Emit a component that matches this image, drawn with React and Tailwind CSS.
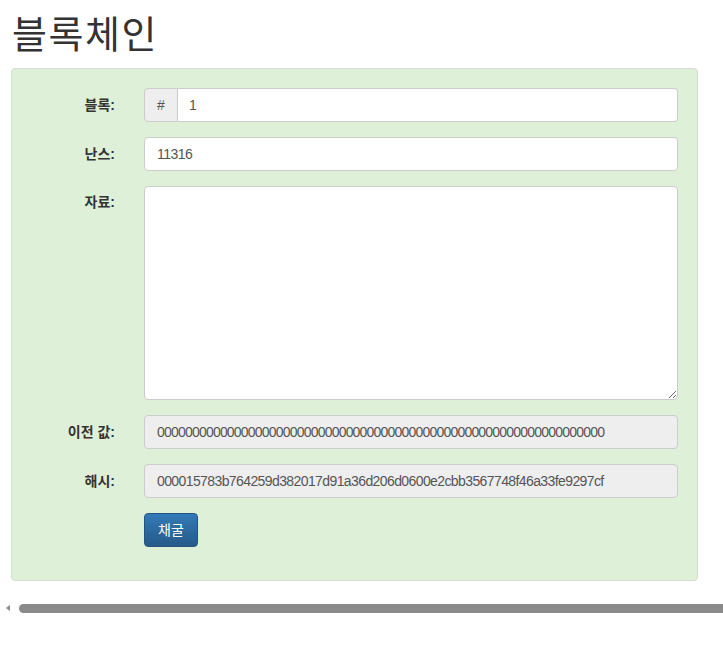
import React from 'react';

const font = { fontFamily: '"Liberation Sans", "Noto Sans CJK KR", sans-serif' };

const Row = ({ label, top, children }) => (
  <div className="flex mb-[15px]">
    <label className={`w-[103px] shrink-0 text-right text-[14px] font-bold text-[#333] ${top ? 'pt-[6px]' : 'pt-[7px]'}`}>{label}</label>
    <div className="ml-[29px] flex-1">{children}</div>
  </div>
);

export default function App() {
  return (
    <div className="w-[723px] h-[664px] bg-white overflow-hidden relative" style={font}>
      <div className="pl-[11px] pr-[25px]">
        <h1 className="pt-[12px] mb-[10px] pl-[1px] text-[38px] leading-[46px] tracking-[1.5px] text-[#333] font-normal">블록체인</h1>

        <div className="bg-[#dff0d8] border border-[#d6dcd3] rounded-[4px] pt-[19px] pb-[18px] pr-[19px] pl-[0px]">
          <Row label="블록:">
            <div className="flex h-[34px]">
              <span className="w-[34px] flex items-center justify-center bg-[#eee] border border-[#ccc] rounded-l-[4px] text-[14px] text-[#555]">#</span>
              <div className="flex-1 bg-white border border-l-0 border-[#ccc] rounded-r-[4px] pl-[11px] pr-[12px] flex items-center text-[14px] text-[#555]">1</div>
            </div>
          </Row>
          <Row label="난스:">
            <div className="h-[34px] bg-white border border-[#ccc] rounded-[4px] px-[12px] flex items-center text-[14px] text-[#555] tracking-[-0.5px]">11316</div>
          </Row>
          <Row label="자료:" top>
            <textarea className="block w-full h-[214px] bg-white border border-[#ccc] rounded-[4px] px-[12px] py-[6px] text-[14px] text-[#555]" defaultValue="" />
          </Row>
          <Row label="이전 값:">
            <div className="h-[34px] bg-[#eee] border border-[#ccc] rounded-[4px] px-[12px] flex items-center text-[14px] text-[#555] overflow-hidden whitespace-nowrap tracking-[-0.8px]">0000000000000000000000000000000000000000000000000000000000000000</div>
          </Row>
          <Row label="해시:">
            <div className="h-[34px] bg-[#eee] border border-[#ccc] rounded-[4px] px-[12px] flex items-center text-[14px] text-[#555] overflow-hidden whitespace-nowrap tracking-[-0.6px]">000015783b764259d382017d91a36d206d0600e2cbb3567748f46a33fe9297cf</div>
          </Row>
          <div className="flex">
            <div className="w-[132px] shrink-0" />
            <button className="h-[34px] px-[13px] rounded-[4px] border border-[#245580] text-white text-[14px] bg-gradient-to-b from-[#337ab7] to-[#265a88]">채굴</button>
          </div>
          <div className="h-[15px]" />
        </div>
      </div>

      <div className="absolute left-0 right-0 top-[602px] h-[12px] flex items-center">
        <svg width="12" height="12" viewBox="0 0 12 12" className="ml-[2px]">
          <polygon points="8,3 4,6 8,9" fill="#8a8a8a" />
        </svg>
        <div className="ml-[5px] flex-1 h-[9px] rounded-l-full bg-[#8a8a8a]" />
      </div>
    </div>
  );
}
